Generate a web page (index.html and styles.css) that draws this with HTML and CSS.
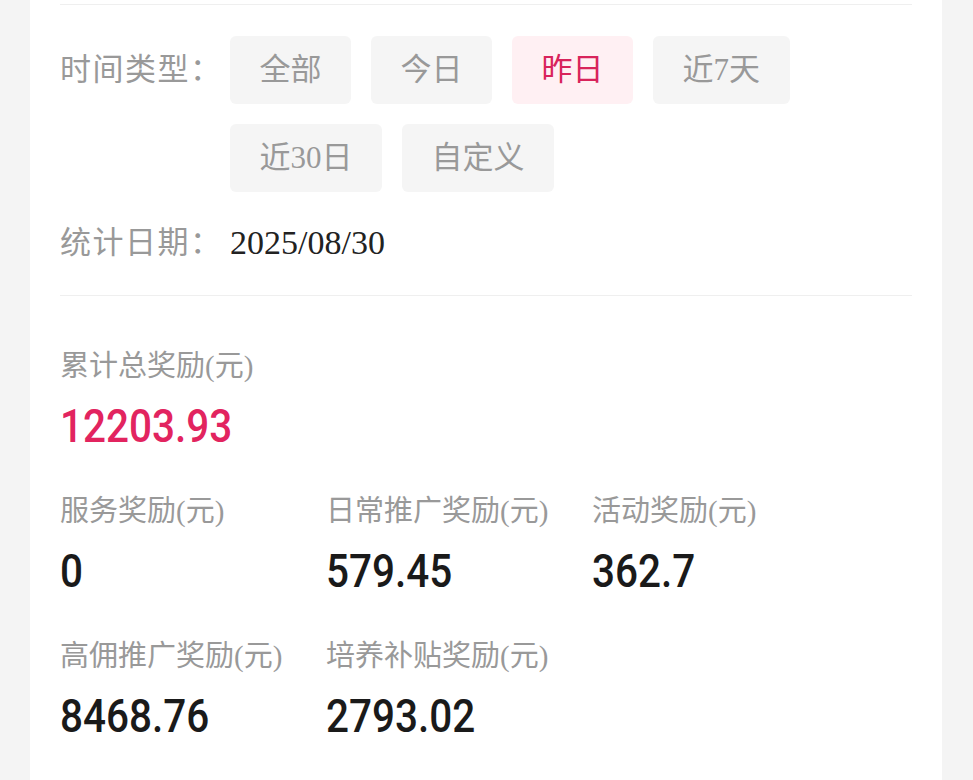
FILE: index.html
```html
<!DOCTYPE html>
<html lang="zh-CN">
<head>
<meta charset="utf-8">
<title>奖励统计</title>
<link rel="stylesheet" href="styles.css">
</head>
<body>
<div class="card">
  <div class="divider"></div>
  <div class="filter-row">
    <div class="filter-label">时间类型：</div>
    <div class="chips">
      <span class="chip">全部</span>
      <span class="chip">今日</span>
      <span class="chip active">昨日</span>
      <span class="chip">近7天</span>
      <span class="chip">近30日</span>
      <span class="chip">自定义</span>
    </div>
  </div>
  <div class="date-row">
    <div class="filter-label">统计日期：</div>
    <div class="date-value">2025/08/30</div>
  </div>
  <div class="divider"></div>
  <div class="stats">
    <div class="stat total">
      <div class="stat-label">累计总奖励(元)</div>
      <div class="stat-value"><span class="num">12203.93</span></div>
    </div>
    <div class="grid">
      <div class="stat">
        <div class="stat-label">服务奖励(元)</div>
        <div class="stat-value"><span class="num">0</span></div>
      </div>
      <div class="stat">
        <div class="stat-label">日常推广奖励(元)</div>
        <div class="stat-value"><span class="num">579.45</span></div>
      </div>
      <div class="stat">
        <div class="stat-label">活动奖励(元)</div>
        <div class="stat-value"><span class="num">362.7</span></div>
      </div>
      <div class="stat">
        <div class="stat-label">高佣推广奖励(元)</div>
        <div class="stat-value"><span class="num">8468.76</span></div>
      </div>
      <div class="stat">
        <div class="stat-label">培养补贴奖励(元)</div>
        <div class="stat-value"><span class="num">2793.02</span></div>
      </div>
    </div>
  </div>
</div>
</body>
</html>
```

FILE: styles.css
```css
html, body {
  margin: 0;
  padding: 0;
  background: #f4f4f4;
  height: 100%;
  overflow: hidden;
}

body {
  font-family: "Liberation Serif", "Noto Sans CJK SC", serif;
  color: #999;
}

.card {
  margin-left: 30px;
  width: 912px;
  min-height: 100%;
  box-sizing: border-box;
  background: #fff;
  padding: 4px 30px 0;
}

.divider {
  height: 1px;
  background: #efefef;
}

.filter-row {
  display: flex;
  align-items: flex-start;
  margin-top: 31px;
}

.filter-label {
  width: 170px;
  flex: none;
  font-size: 31px;
  line-height: 68px;
  letter-spacing: 1.5px;
  color: #999;
  white-space: nowrap;
}

.chips {
  display: flex;
  flex-wrap: wrap;
  gap: 20px;
  flex: 1;
}

.chip {
  display: inline-block;
  height: 68px;
  line-height: 68px;
  padding: 0 29.5px;
  font-size: 31px;
  color: #999;
  background: #f5f5f5;
  border-radius: 6px;
}

.chip.active {
  background: #fff0f3;
  color: #d8245b;
}

.date-row {
  display: flex;
  align-items: center;
  margin-top: 17px;
  margin-bottom: 18px;
}

.date-value {
  font-size: 34px;
  line-height: 68px;
  color: #222;
}

.stats {
  padding-top: 50px;
}

.grid {
  display: grid;
  grid-template-columns: repeat(3, 266px);
  row-gap: 40px;
  margin-top: 40px;
}

.stat-label {
  font-size: 29px;
  line-height: 40px;
  color: #999;
  white-space: nowrap;
}

.stat-value {
  margin-top: 15px;
  height: 50px;
  line-height: 50px;
  font-family: Roboto, "Liberation Sans", sans-serif;
  font-size: 46px;
  font-weight: 500;
  color: #1a1a1a;
}

.num {
  display: inline-block;
  transform: scaleX(0.88);
  transform-origin: left center;
}

.total .stat-value {
  color: #e2245f;
}
```
